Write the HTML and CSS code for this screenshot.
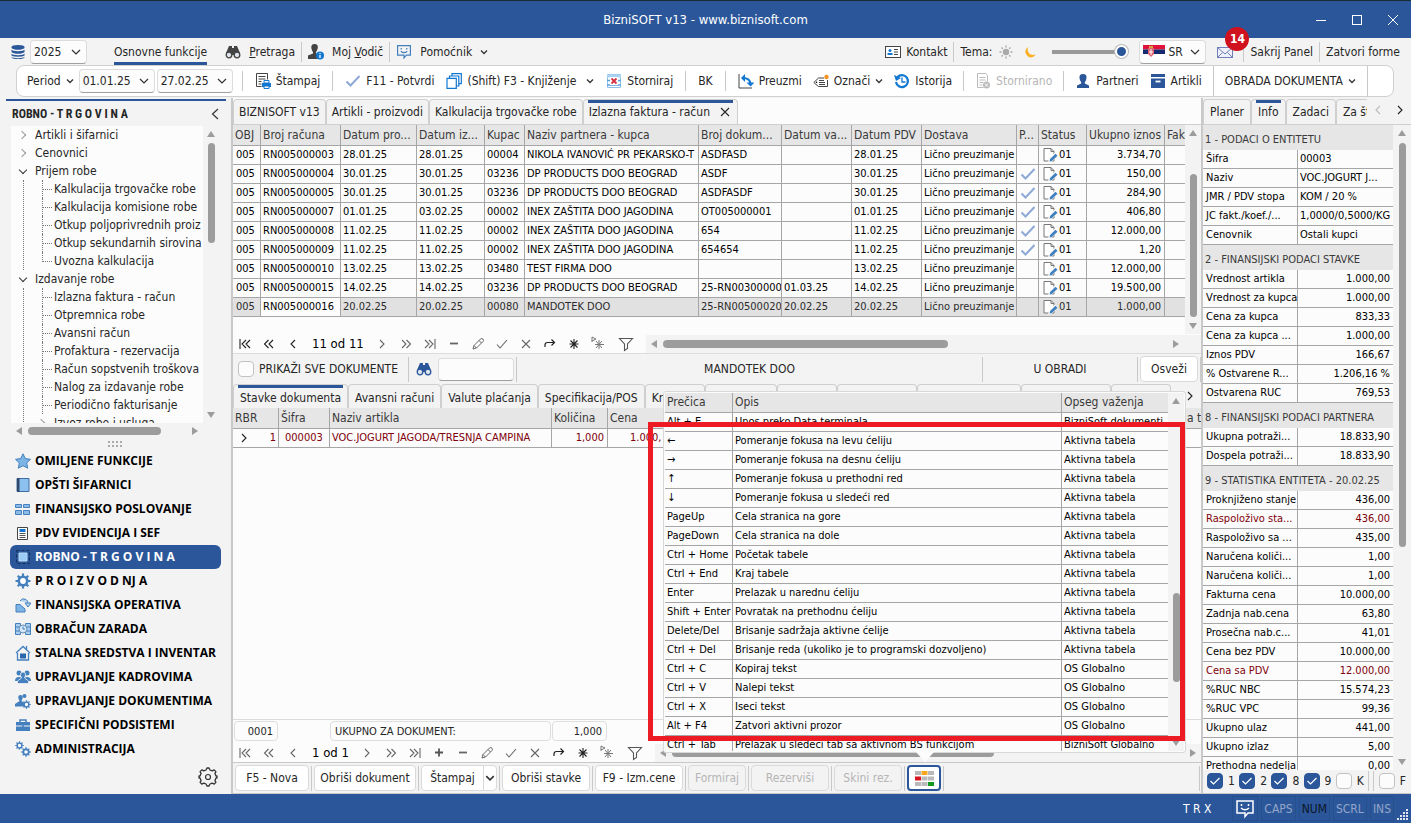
FILE: index.html
```html
<!DOCTYPE html>
<html lang="sr-Latn">
<head>
<meta charset="utf-8">
<title>BizniSOFT v13 - www.biznisoft.com</title>
<link rel="stylesheet" href="styles.css">
</head>
<body>
<svg class="symbols" aria-hidden="true">
  <symbol id="chev" viewBox="0 0 8 8"><path d="M1 2.500l3 3 3-3" fill="none" stroke="#333" stroke-width="1.300"/></symbol>
  <symbol id="doc" viewBox="0 0 16 16"><path d="M2 1.500h7l3 3V14H2z" fill="#fff" stroke="#777"/><path d="M9 1.500v3h3" fill="none" stroke="#777"/><path d="M6 15.500l1-4 6-6 3 3-6 6z" fill="#fcfcfc"/><path d="M7.500 14.500l.6-2.400 5.400-5.400 2 2-5.600 5.400z" fill="#3f7fbf"/></symbol>
  <symbol id="tick" viewBox="0 0 16 16"><path d="M1.500 8.500l4 4 9-9.500" fill="none" stroke="#8ea9d6" stroke-width="2"/></symbol>
  <symbol id="first" viewBox="0 0 16 16"><path d="M3 3v10M9 4L5 8l4 4M13 4L9 8l4 4" fill="none" stroke="currentColor" stroke-width="1.100"/></symbol>
  <symbol id="prev2" viewBox="0 0 16 16"><path d="M7.500 4l-4 4 4 4M12 4L8 8l4 4" fill="none" stroke="currentColor" stroke-width="1.100"/></symbol>
  <symbol id="prev" viewBox="0 0 16 16"><path d="M10 4L6 8l4 4" fill="none" stroke="currentColor" stroke-width="1.100"/></symbol>
  <symbol id="next" viewBox="0 0 16 16"><path d="M6 4l4 4-4 4" fill="none" stroke="currentColor" stroke-width="1.100"/></symbol>
  <symbol id="next2" viewBox="0 0 16 16"><path d="M4 4l4 4-4 4M8.500 4l4 4-4 4" fill="none" stroke="currentColor" stroke-width="1.100"/></symbol>
  <symbol id="last" viewBox="0 0 16 16"><path d="M3 4l4 4-4 4M7 4l4 4-4 4M13 3v10" fill="none" stroke="currentColor" stroke-width="1.100"/></symbol>
  <symbol id="plus" viewBox="0 0 16 16"><path d="M4 7.500h8M8 3.500v8" stroke="#555" stroke-width="1.800"/></symbol>
  <symbol id="minus" viewBox="0 0 16 16"><path d="M4 7.500h8" stroke="#666" stroke-width="1.800"/></symbol>
  <symbol id="pencil" viewBox="0 0 16 16"><path d="M3 13l1-3.500L10.500 3q1.500-1 2.500.2t0 2.300L6.500 12zM9 4.500L11.500 7M4 9.500L6.500 12" fill="none" stroke="currentColor"/></symbol>
  <symbol id="ok" viewBox="0 0 16 16"><path d="M3 8.500l3 3.500 7-8" fill="none" stroke="currentColor" stroke-width="1.100"/></symbol>
  <symbol id="cross" viewBox="0 0 16 16"><path d="M4 4l8 8M12 4l-8 8" fill="none" stroke="currentColor" stroke-width="1.100"/></symbol>
  <symbol id="redo" viewBox="0 0 16 16"><path d="M3 11V9q0-2.500 2.500-2.500H12M9.500 3.500l3 3-3 3" fill="none" stroke="#222" stroke-width="1.200"/></symbol>
  <symbol id="star" viewBox="0 0 16 16"><path d="M8 3v10M3.500 8h9M4.500 4.500l7 7M11.500 4.500l-7 7" stroke="#222" stroke-width="1.100"/></symbol>
  <symbol id="starp" viewBox="0 0 16 16"><path d="M9 4v9M5 8.500h9M6 5l6 7M12 5l-6 7" stroke="#777"/><path d="M2 1v5M2 1l4 2-4 2" fill="none" stroke="#777"/></symbol>
  <symbol id="funnel" viewBox="0 0 16 16"><path d="M1.500 2.500h13L9.500 8v4.500l-3 2V8z" fill="none" stroke="#555" stroke-width="1.100"/></symbol>
  <symbol id="binoc" viewBox="0 0 16 16"><path d="M4 2h3v2h2V2h3l3 7v2H1V9z" fill="currentColor"/><circle cx="4" cy="11" r="2.800" fill="#dfe6f0" stroke="currentColor" stroke-width="1.300"/><circle cx="12" cy="11" r="2.800" fill="#dfe6f0" stroke="currentColor" stroke-width="1.300"/></symbol>
  <symbol id="person" viewBox="0 0 16 16"><path d="M8 1q4 0 3.500 4.200Q11 8 9.800 9v1.500L14 12.500V15H2v-2.500l4.200-2V9Q5 8 4.500 5.200 4 1 8 1z" fill="currentColor"/></symbol>
  <symbol id="smile" viewBox="0 0 20 20"><path d="M2 2h16v12h-5l-3 3.500V14H2z" fill="none" stroke="currentColor" stroke-width="1.500"/><path d="M6.500 5v2M13.500 5v2M6 9q4 3.500 8 0" fill="none" stroke="currentColor" stroke-width="1.500"/></symbol>
  <symbol id="cog" viewBox="0 0 16 16"><circle cx="8" cy="8" r="4.200" fill="#fff" stroke="#4480bd" stroke-width="2.600"/><path d="M8 .5v3M8 12.500v3M.5 8h3M12.500 8h3M2.700 2.700l2.100 2.100M11.200 11.200l2.100 2.100M13.300 2.700l-2.100 2.100M4.800 11.200l-2.100 2.100" stroke="#4480bd" stroke-width="2.200"/></symbol>
</svg>

<header class="titlebar">
  <h1>BizniSOFT v13 - www.biznisoft.com</h1>
  <div class="winbtns">
    <button aria-label="Minimize"><svg width="12" height="12"><path d="M1 6.500h10" stroke="#fff"/></svg></button>
    <button aria-label="Maximize"><svg width="12" height="12"><rect x="1.500" y="1.500" width="9" height="9" fill="none" stroke="#fff"/></svg></button>
    <button aria-label="Close"><svg width="12" height="12"><path d="M1 1l10 10M11 1L1 11" stroke="#fff"/></svg></button>
  </div>
</header>

<nav class="menu">
  <div class="db"><svg class="ic" viewBox="0 0 16 16"><path d="M1.500 3q0-2 6.500-2t6.500 2v10q0 2-6.500 2t-6.500-2z" fill="#2b579a"/><path d="M1 4.500q2 2 7 2t7-2M1 8.500q2 2 7 2t7-2M1 12q2 1.500 7 1.500t7-1.500" fill="none" stroke="#f3f3f3" stroke-width="1.300"/></svg>
  <select class="combo year" aria-label="Godina"><option>2025</option></select></div>
  <a class="main-tab" href="#">Osnovne funkcije</a>
  <a class="mi" href="#"><svg class="ic dark"><use href="#binoc"/></svg><span><u>P</u>retraga</span></a>
  <i class="sep"></i>
  <a class="mi" href="#"><svg class="ic dark" viewBox="0 0 16 16"><path d="M6.500 0q3.800 0 3.300 4Q9 7 8 8v1.200L12 11v4H0v-3.500l5-2V8Q4 7 3.300 4 3 0 6.500 0z" fill="currentColor"/><circle cx="12" cy="11.500" r="4" fill="#1177d1"/><path d="M12 9v1M12 11v3" stroke="#fff" stroke-width="1.300"/></svg><span>Moj <u>V</u>odič</span></a>
  <i class="sep"></i>
  <a class="mi" href="#"><svg class="ic mid"><use href="#smile"/></svg><span>Pomoćnik</span><svg class="cv"><use href="#chev"/></svg></a>
  <span class="grow"></span>
  <a class="mi near" href="#"><svg class="ic" viewBox="0 0 16 16"><rect x=".5" y="2.500" width="15" height="11" fill="#fff" stroke="#444"/><circle cx="5" cy="6.500" r="1.500" fill="#1177d1"/><path d="M2.500 11V9h5v2z" fill="#1177d1"/><path d="M9 5.500h4M9 8h4M9 10.500h4" stroke="#444"/></svg><span>Kontakt</span></a>
  <i class="sep"></i>
  <label class="theme" for="tema">Tema:</label>
  <svg class="ic" viewBox="0 0 16 16"><circle cx="8" cy="8" r="3.200" fill="#aaa"/><path d="M8 1.500v2M8 12.500v2M1.500 8h2M12.500 8h2M3.500 3.500l1.300 1.300M11.200 11.200l1.300 1.300M12.500 3.500l-1.300 1.300M4.800 11.200l-1.300 1.300" stroke="#aaa" stroke-width="1.400"/></svg>
  <svg class="ic moon" viewBox="0 0 16 16"><path d="M6 3Q1 7 5 11.500t9-1Q8 12 6.500 8.500 5 5.500 6 3z" fill="#fdb022"/></svg>
  <input id="tema" class="slider" type="range" min="0" max="100" value="100">
  <div class="lang"><svg width="22" height="13"><rect width="22" height="4.500" fill="#e0123a"/><rect y="4.500" width="22" height="4.500" fill="#152a70"/><rect y="9" width="22" height="4" fill="#fff"/><path d="M5 3h6v6l-3 3-3-3z" fill="#e06070"/><path d="M6 1h4v2H6z" fill="#d8a040"/><path d="M8 4v6M6 7h4" stroke="#fff"/></svg>
  <select class="combo" aria-label="Jezik"><option>SR</option></select></div>
  <a class="mail" href="#" aria-label="Poruke"><svg class="ic" viewBox="0 0 16 16"><rect x=".5" y="3.500" width="15" height="10" fill="#eef1fa" stroke="#7180b8"/><path d="M.5 3.500L8 10l7.500-6.500M.5 13.500l5-5M15.500 13.500l-5-5" fill="none" stroke="#7180b8"/></svg><b class="badge">14</b></a>
  <i class="sep"></i>
  <a href="#">Sakrij Panel</a>
  <i class="sep"></i>
  <a class="last" href="#">Zatvori forme</a>
</nav>

<div class="ribbon">
  <button class="cmd tight">Period<svg class="cv"><use href="#chev"/></svg></button>
  <div class="dates"><select class="combo" aria-label="Od"><option>01.01.25</option></select><select class="combo" aria-label="Do"><option>27.02.25</option></select></div>
  <i class="sep"></i>
  <button class="cmd"><svg class="ic" viewBox="0 0 16 16"><path d="M1.500.5h11v6M1.500.5v13h5M3.500 3.500h7M3.500 6h7M3.500 8.500h3M3.500 11h3" fill="none" stroke="#444"/><path d="M7 10h9v4H7z" fill="#1177d1"/><path d="M9 7.500h5V10H9zM9 13h5v2.500H9z" fill="#fff" stroke="#1177d1"/></svg>Štampaj</button>
  <i class="sep"></i>
  <button class="cmd"><svg class="ic"><use href="#tick"/></svg>F11 - Potvrdi</button>
  <button class="cmd"><svg class="ic" viewBox="0 0 16 16"><g fill="#fff" stroke="#1177d1" stroke-width="1.200"><path d="M6 .7h9.300v10H6z"/><path d="M3.500 3h9.300v10H3.500z"/><path d="M1 5.300h9.300v10H1z"/></g></svg>(Shift) F3 - Knjiženje<svg class="cv far"><use href="#chev"/></svg></button>
  <button class="cmd"><svg class="ic" viewBox="0 0 16 16"><path d="M1.500 1.500h13v13h-13z" fill="#fff" stroke="#8fc0ea"/><path d="M1 3h14" stroke="#a9d2f3" stroke-width="3"/><path d="M1 7.500h3M12 7.500h3M1 12h14" stroke="#55a0df" stroke-width="1.500"/><rect x="4" y="4" width="8" height="8" fill="#fff"/><path d="M5.500 5.500l5 5M10.500 5.500l-5 5" stroke="#d83040" stroke-width="1.800"/></svg>Storniraj</button>
  <i class="sep"></i>
  <button class="cmd">BK</button>
  <i class="sep"></i>
  <div class="more-cmds">
  <button class="cmd"><svg class="ic" viewBox="0 0 16 16"><path d="M1 1v14h13" fill="none" stroke="#444"/><path d="M3 5l4-4v8zM8.500 9.500h8l-4 4z" fill="#1177d1"/><path d="M5 5q7 0 7.500 6" fill="none" stroke="#1177d1" stroke-width="2"/></svg>Preuzmi</button>
  <button class="cmd"><svg class="ic" viewBox="0 0 16 16"><path d="M14.500 7v6.500h-9L.8 9.500 5.500 5H11" fill="none" stroke="#444"/><path d="M6 7.500h5M6 9.500h6M6 11.500h6" stroke="#444"/><circle cx="3.500" cy="9.300" r=".8"/><circle cx="13.500" cy="4" r="2.200" fill="#f6921e"/></svg>Označi<svg class="cv"><use href="#chev"/></svg></button>
  <button class="cmd"><svg class="ic" viewBox="0 0 16 16"><path d="M3.500 4a6 6 0 1 1-1.500 5" fill="none" stroke="#1177d1" stroke-width="2.200"/><path d="M0 2l2 6 5-3z" fill="#1177d1"/><path d="M8 4.500V9h3.500" fill="none" stroke="#1177d1" stroke-width="1.300"/></svg>Istorija</button>
  <i class="sep"></i>
  <button class="cmd" disabled><svg class="ic" viewBox="0 0 16 16"><path d="M2.500.5h8l2 2v6M2.500.5v14h6M4.500 4.500h6M4.500 7h6M4.500 9.500h4M4.500 12h3" fill="none" stroke="#bbb"/><circle cx="11.500" cy="12" r="3.500" fill="#bbb"/><path d="M10 10.500l3 3M13 10.500l-3 3" stroke="#fff"/></svg>Stornirano</button>
  <i class="sep"></i>
  <button class="cmd"><svg class="ic blue"><use href="#person"/></svg>Partneri</button>
  <button class="cmd"><svg class="ic" viewBox="0 0 16 16"><path d="M1 1h14v3H1zM1 5.500h14V15H1z" fill="#2b579a"/><path d="M5.500 8.500h5" stroke="#fff" stroke-width="1.800"/></svg>Artikli</button>
  <i class="sep full"></i>
  <button class="cmd tight">OBRADA DOKUMENTA<svg class="cv"><use href="#chev"/></svg></button>
  <i class="sep full"></i>
  </div>
</div>

<main class="main">
  <aside class="side">
    <div class="side-head"><h2>ROBNO - T R G O V I N A</h2><button aria-label="Skupi"><svg width="8" height="12"><path d="M7 1L1.500 6 7 11" fill="none" stroke="#333" stroke-width="1.200"/></svg></button></div>
    <div class="tree-box">
      <ul class="tree">
        <li class="closed">Artikli i šifarnici</li>
        <li class="closed">Cenovnici</li>
        <li class="open">Prijem robe
          <ul>
            <li>Kalkulacija trgovačke robe</li>
            <li>Kalkulacija komisione robe</li>
            <li>Otkup poljoprivrednih proiz</li>
            <li>Otkup sekundarnih sirovina</li>
            <li>Uvozna kalkulacija</li>
          </ul>
        </li>
        <li class="open">Izdavanje robe
          <ul>
            <li>Izlazna faktura - račun</li>
            <li>Otpremnica robe</li>
            <li>Avansni račun</li>
            <li>Profaktura - rezervacija</li>
            <li>Račun sopstvenih troškova</li>
            <li>Nalog za izdavanje robe</li>
            <li>Periodično fakturisanje</li>
            <li class="closed">Izvoz robe i usluga</li>
          </ul>
        </li>
      </ul>
      <div class="vscroll tree-v"><i class="up"></i><b></b><i class="down"></i></div>
    </div>
    <div class="hscroll tree-h"><i class="lt"></i><b></b><i class="rt"></i></div>
    <div class="grip"></div>
    <nav class="modules">
      <a href="#"><svg class="ic" viewBox="0 0 16 16"><path d="M8 .8l2.300 4.800 5.200.7-3.800 3.600 1 5.300L8 12.700l-4.700 2.500 1-5.300L.5 6.300l5.200-.7z" fill="#7db4e6" stroke="#4480bd"/></svg>OMILJENE FUNKCIJE</a>
      <a href="#"><svg class="ic" viewBox="0 0 16 16"><path d="M2 1.500h12v13H2z" fill="#8cc0ee" stroke="#3f6fa5"/><path d="M2 1h2.500v14H2z" fill="#30496b"/></svg>OPŠTI ŠIFARNICI</a>
      <a href="#"><svg class="ic" viewBox="0 0 16 16"><g fill="#8cbbe6" stroke="#4480bd"><path d="M.5 3.500h6v3h-6zM8.500 3.500h6v3h-6zM.5 9.500h6v4h-6zM8.500 9.500h6v4h-6z"/></g></svg>FINANSIJSKO POSLOVANJE</a>
      <a href="#"><svg class="ic" viewBox="0 0 16 16"><path d="M2.500 2.500h10v12h-10z" fill="#fff" stroke="#444"/><path d="M4.500 4h6v3h-6z" fill="#1177d1"/><path d="M4.500 8.500h6M4.500 10.500h6M4.500 12.500h6" stroke="#555"/></svg>PDV EVIDENCIJA I SEF</a>
      <a href="#" class="on"><svg class="ic" viewBox="0 0 16 16"><path d="M1.500 1.500h13v13h-13z" fill="none" stroke="#16305c" stroke-dasharray="3 2"/><path d="M4 4h8v8H4z" fill="#9ccbf5" stroke="#b8dcfa"/></svg>ROBNO - T R G O V I N A</a>
      <a href="#"><svg class="ic"><use href="#cog"/></svg>P R O I Z V O D NJ A</a>
      <a href="#"><svg class="ic" viewBox="0 0 16 16"><path d="M1 7.500h4l5 4.500v3H1z" fill="#7db4e6" stroke="#4480bd"/><path d="M5 4q2-3.500 6-1.500Q13 4 13 6M10 6h6l-3 4z" fill="#b5d4ef" stroke="#4480bd"/></svg>FINANSIJSKA OPERATIVA</a>
      <a href="#"><svg class="ic" viewBox="0 0 16 16"><path d="M.5 2.500h5v11h-5zM10.500 2.500h5v11h-5z" fill="#a9cdee" stroke="#4480bd"/><path d="M0 6h16M0 10h16" stroke="#4480bd"/><circle cx="8" cy="8" r="4" fill="#d4e7f8" stroke="#6a8fb5"/><path d="M8 5.500V8h2" fill="none" stroke="#4480bd"/></svg>OBRAČUN ZARADA</a>
      <a href="#"><svg class="ic" viewBox="0 0 16 16"><path d="M1 8l7-6.500L15 8M2.500 8v7h11V8M11.500 1v3.500" fill="none" stroke="#4480bd" stroke-width="1.300"/><path d="M5 8.500h6v5H5z" fill="#2b67ab"/></svg>STALNA SREDSTVA I INVENTAR</a>
      <a href="#"><svg class="ic" viewBox="0 0 16 16"><g fill="#4480bd"><circle cx="4" cy="4" r="2.500"/><circle cx="12" cy="4" r="2.500"/><path d="M0 12q0-4 4-4t4 4zM8 12q0-4 4-4t4 4z"/></g><path d="M8 3q3 0 2.500 3.500L9.500 9l4 3v2.500h-11V12l4-3-1-2.500Q5 3 8 3z" fill="#4480bd" stroke="#f3f3f3" stroke-width=".8"/></svg>UPRAVLJANJE KADROVIMA</a>
      <a href="#"><svg class="ic" viewBox="0 0 16 16"><g fill="#4480bd"><circle cx="9.500" cy="3" r="2"/><path d="M5.500 2q2.500 0 2.200 3L6.500 8l3 2v3.500H0V11l4.500-3-1.200-3Q3 2 5.500 2z"/></g><svg x="7" y="7" width="9" height="9"><use href="#cog"/></svg></svg>UPRAVLJANJE DOKUMENTIMA</a>
      <a href="#"><svg class="ic" viewBox="0 0 16 16"><path d="M1 5h14v3.500H1zM1 9.500h14V14H1z" fill="#4480bd"/><path d="M5 5V3h6v2M8 8v3" fill="none" stroke="#4480bd" stroke-width="1.500"/></svg>SPECIFIČNI PODSISTEMI</a>
      <a href="#"><svg class="ic" viewBox="0 0 16 16"><svg width="9" height="9"><use href="#cog"/></svg><svg x="6" y="6" width="10" height="10"><use href="#cog"/></svg></svg>ADMINISTRACIJA</a>
    </nav>
    <button class="gear" aria-label="Podešavanja"><svg width="20" height="20" viewBox="0 0 20 20"><path d="M8 3l1-2h2l1 2 2.200.9 2-1 1.700 1.700-1 2L18 9h1v2h-1l-1.100 2.400 1 2-1.700 1.700-2-1L12 17l-1 2H9l-1-2-2.200-.9-2 1-1.700-1.700 1-2L2 11H1V9h1l1.100-2.400-1-2 1.700-1.700 2 1z" fill="none" stroke="#333" stroke-width="1.300" stroke-linejoin="round"/><circle cx="10" cy="10" r="2.500" fill="none" stroke="#333" stroke-width="1.200"/></svg></button>
  </aside>

  <section class="center">
    <div class="tabs top-tabs">
      <button>BIZNISOFT v13</button><button>Artikli - proizvodi</button><button>Kalkulacija trgovačke robe</button><button class="on">Izlazna faktura - račun<svg class="x"><use href="#cross"/></svg></button>
    </div>
    <div class="docs">
      <div class="docs-clip">
      <table class="grid">
        <colgroup><col class="c28"><col class="c80"><col class="c76"><col class="c68"><col class="c40"><col><col class="c83"><col class="c70"><col class="c70"><col class="c95"><col class="c22"><col class="c48"><col class="c78"><col class="c20"></colgroup>
        <thead><tr><th>OBJ</th><th>Broj računa</th><th>Datum pro...</th><th>Datum iz...</th><th>Kupac</th><th>Naziv partnera - kupca</th><th>Broj dokum...</th><th>Datum va...</th><th>Datum PDV</th><th>Dostava</th><th>P...</th><th>Status</th><th>Ukupno iznos</th><th>Fak</th></tr></thead>
        <tbody>
          <tr><td>005</td><td>RN005000003</td><td>28.01.25</td><td>28.01.25</td><td>00004</td><td>NIKOLA IVANOVIĆ PR PEKARSKO-T</td><td>ASDFASD</td><td></td><td>28.01.25</td><td>Lično preuzimanje</td><td></td><td class="st"><svg><use href="#doc"/></svg>01</td><td class="num">3.734,70</td><td></td></tr>
          <tr><td>005</td><td>RN005000004</td><td>30.01.25</td><td>30.01.25</td><td>03236</td><td>DP PRODUCTS DOO BEOGRAD</td><td>ASDF</td><td></td><td>30.01.25</td><td>Lično preuzimanje</td><td class="st"><svg><use href="#tick"/></svg></td><td class="st"><svg><use href="#doc"/></svg>01</td><td class="num">150,00</td><td></td></tr>
          <tr><td>005</td><td>RN005000005</td><td>30.01.25</td><td>30.01.25</td><td>03236</td><td>DP PRODUCTS DOO BEOGRAD</td><td>ASDFASDF</td><td></td><td>30.01.25</td><td>Lično preuzimanje</td><td class="st"><svg><use href="#tick"/></svg></td><td class="st"><svg><use href="#doc"/></svg>01</td><td class="num">284,90</td><td></td></tr>
          <tr><td>005</td><td>RN005000007</td><td>01.01.25</td><td>03.02.25</td><td>00002</td><td>INEX ZAŠTITA DOO JAGODINA</td><td>OT005000001</td><td></td><td>01.01.25</td><td>Lično preuzimanje</td><td class="st"><svg><use href="#tick"/></svg></td><td class="st"><svg><use href="#doc"/></svg>01</td><td class="num">406,80</td><td></td></tr>
          <tr><td>005</td><td>RN005000008</td><td>11.02.25</td><td>11.02.25</td><td>00002</td><td>INEX ZAŠTITA DOO JAGODINA</td><td>654</td><td></td><td>11.02.25</td><td>Lično preuzimanje</td><td class="st"><svg><use href="#tick"/></svg></td><td class="st"><svg><use href="#doc"/></svg>01</td><td class="num">12.000,00</td><td></td></tr>
          <tr><td>005</td><td>RN005000009</td><td>11.02.25</td><td>11.02.25</td><td>00002</td><td>INEX ZAŠTITA DOO JAGODINA</td><td>654654</td><td></td><td>11.02.25</td><td>Lično preuzimanje</td><td class="st"><svg><use href="#tick"/></svg></td><td class="st"><svg><use href="#doc"/></svg>01</td><td class="num">1,20</td><td></td></tr>
          <tr><td>005</td><td>RN005000010</td><td>13.02.25</td><td>13.02.25</td><td>03480</td><td>TEST FIRMA DOO</td><td></td><td></td><td>13.02.25</td><td>Lično preuzimanje</td><td></td><td class="st"><svg><use href="#doc"/></svg>01</td><td class="num">12.000,00</td><td></td></tr>
          <tr><td>005</td><td>RN005000015</td><td>14.02.25</td><td>14.02.25</td><td>03236</td><td>DP PRODUCTS DOO BEOGRAD</td><td>25-RN00300000</td><td>01.03.25</td><td>14.02.25</td><td>Lično preuzimanje</td><td></td><td class="st"><svg><use href="#doc"/></svg>01</td><td class="num">19.500,00</td><td></td></tr>
          <tr class="sel"><td>005</td><td class="focus">RN005000016</td><td>20.02.25</td><td>20.02.25</td><td>00080</td><td>MANDOTEK DOO</td><td>25-RN00500020</td><td>20.02.25</td><td>20.02.25</td><td>Lično preuzimanje</td><td></td><td class="st"><svg><use href="#doc"/></svg>01</td><td class="num">1.000,00</td><td></td></tr>
        </tbody>
      </table>
      </div>
      <div class="vscroll docs-v"><i class="up"></i><b></b><i class="down"></i></div>
    </div>
    <div class="recnav">
      <button aria-label="Prvi"><svg><use href="#first"/></svg></button><button aria-label="Stranica nazad"><svg><use href="#prev2"/></svg></button><button aria-label="Prethodni"><svg><use href="#prev"/></svg></button>
      <span>11 od 11</span>
      <button class="dim" aria-label="Sledeći"><svg><use href="#next"/></svg></button><button class="dim" aria-label="Stranica napred"><svg><use href="#next2"/></svg></button><button class="dim" aria-label="Poslednji"><svg><use href="#last"/></svg></button><button aria-label="Briši"><svg><use href="#minus"/></svg></button><button class="dim" aria-label="Izmeni"><svg><use href="#pencil"/></svg></button><button class="dim" aria-label="Potvrdi"><svg><use href="#ok"/></svg></button><button class="dim" aria-label="Odustani"><svg><use href="#cross"/></svg></button><button aria-label="Osveži"><svg><use href="#redo"/></svg></button><button aria-label="Obeleži"><svg><use href="#star"/></svg></button><button aria-label="Idi na oznaku"><svg><use href="#starp"/></svg></button><button class="wide" aria-label="Filter"><svg><use href="#funnel"/></svg></button>
      <div class="hscroll docs-h"><i class="lt"></i><b></b><i class="rt"></i></div>
    </div>
    <div class="filter">
      <label><input type="checkbox" class="cb">PRIKAŽI SVE DOKUMENTE</label>
      <i class="sep"></i>
      <svg class="ic blue"><use href="#binoc"/></svg>
      <input class="find" type="text" aria-label="Traži">
      <i class="sep"></i>
      <span class="partner">MANDOTEK DOO</span>
      <i class="sep"></i>
      <span class="state">U OBRADI</span>
      <i class="sep"></i>
      <button class="btn refresh">Osveži</button>
      <i class="sep"></i>
    </div>
    <div class="sub-tabs-row">
      <div class="tabs sub-tabs">
        <button class="on">Stavke dokumenta</button><button>Avansni računi</button><button>Valute plaćanja</button><button>Specifikacija/POS</button><button class="w60 start">Kn</button><button class="w72"></button><button class="w60"></button><button class="w80"></button><button class="w104"></button><button class="w90"></button><button class="w60"></button>
      </div>
      <button class="more" aria-label="Još kartica"><svg><use href="#next"/></svg></button>
    </div>
    <div class="items">
      <table class="grid">
        <colgroup><col class="c45"><col class="c51"><col class="c222"><col class="c56"><col class="c80"><col><col class="c16"></colgroup>
        <thead><tr><th>RBR</th><th>Šifra</th><th>Naziv artikla</th><th>Količina</th><th>Cena</th><th></th><th>a t</th></tr></thead>
        <tbody><tr class="red"><td class="rbr"><svg><use href="#next"/></svg>1</td><td class="code">000003</td><td>VOC.JOGURT JAGODA/TRESNJA CAMPINA</td><td class="num">1,000</td><td class="price">1.000,</td><td></td><td></td></tr></tbody>
      </table>
    </div>
    <div class="totals"><output class="t1">0001</output><output class="t2">UKUPNO ZA DOKUMENT:</output><output class="t3">1,000</output></div>
    <div class="recnav low">
      <button class="dim" aria-label="Prva"><svg><use href="#first"/></svg></button><button class="dim" aria-label="Stranica nazad"><svg><use href="#prev2"/></svg></button><button class="dim" aria-label="Prethodna"><svg><use href="#prev"/></svg></button>
      <span>1 od 1</span>
      <button class="dim" aria-label="Sledeća"><svg><use href="#next"/></svg></button><button class="dim" aria-label="Stranica napred"><svg><use href="#next2"/></svg></button><button class="dim" aria-label="Poslednja"><svg><use href="#last"/></svg></button><button aria-label="Dodaj"><svg><use href="#plus"/></svg></button><button aria-label="Briši"><svg><use href="#minus"/></svg></button><button class="dim" aria-label="Izmeni"><svg><use href="#pencil"/></svg></button><button class="dim" aria-label="Potvrdi"><svg><use href="#ok"/></svg></button><button class="dim" aria-label="Odustani"><svg><use href="#cross"/></svg></button><button aria-label="Osveži"><svg><use href="#redo"/></svg></button><button aria-label="Obeleži"><svg><use href="#star"/></svg></button><button aria-label="Idi na oznaku"><svg><use href="#starp"/></svg></button><button class="wide" aria-label="Filter"><svg><use href="#funnel"/></svg></button>
      <div class="hscroll items-h"><i class="lt"></i><b></b><i class="rt"></i></div>
    </div>
    <div class="actions">
      <button class="btn b74">F5 - Nova</button><i class="sep"></i>
      <button class="btn b102">Obriši dokument</button><i class="sep"></i>
      <div class="split"><button>Štampaj</button><button class="arrow" aria-label="Opcije štampe"><svg width="10" height="10"><use href="#chev"/></svg></button></div><i class="sep"></i>
      <button class="btn b88">Obriši stavke</button><i class="sep"></i>
      <button class="btn b88">F9 - Izm.cene</button><i class="sep"></i>
      <button class="btn b58" disabled>Formiraj</button><i class="sep"></i>
      <button class="btn b78" disabled>Rezerviši</button><i class="sep"></i>
      <button class="btn b68" disabled>Skini rez.</button><i class="sep"></i>
      <button class="btn keys" aria-label="Prečice"><svg width="19" height="15"><g fill="#b9b9b9"><path d="M0 0h6v4H0zM13 0h6v4h-6zM6.500 5.500h6v4h-6zM13 5.500h6v4h-6zM0 11h6v4H0zM6.500 11h6v4h-6z"/></g><path d="M6.500 0h6v4h-6z" fill="#f6a821"/><path d="M0 5.500h6v4H0z" fill="#d8151f"/><path d="M13 11h6v4h-6z" fill="#139a1e"/></svg></button><i class="sep"></i>
      <i class="sep tail"></i>
    </div>

    <div class="popup">
      <div class="popup-body">
        <div class="popup-clip">
        <table class="grid">
          <colgroup><col class="c68"><col><col class="c106"></colgroup>
          <thead><tr><th>Prečica</th><th>Opis</th><th>Opseg važenja</th></tr></thead>
          <tbody>
            <tr><td>Alt + E</td><td>Unos preko Data terminala</td><td>BizniSoft dokumenti</td></tr>
            <tr><td>←</td><td>Pomeranje fokusa na levu ćeliju</td><td>Aktivna tabela</td></tr>
            <tr><td>→</td><td>Pomeranje fokusa na desnu ćeliju</td><td>Aktivna tabela</td></tr>
            <tr><td>↑</td><td>Pomeranje fokusa u prethodni red</td><td>Aktivna tabela</td></tr>
            <tr><td>↓</td><td>Pomeranje fokusa u sledeći red</td><td>Aktivna tabela</td></tr>
            <tr><td>PageUp</td><td>Cela stranica na gore</td><td>Aktivna tabela</td></tr>
            <tr><td>PageDown</td><td>Cela stranica na dole</td><td>Aktivna tabela</td></tr>
            <tr><td>Ctrl + Home</td><td>Početak tabele</td><td>Aktivna tabela</td></tr>
            <tr><td>Ctrl + End</td><td>Kraj tabele</td><td>Aktivna tabela</td></tr>
            <tr><td>Enter</td><td>Prelazak u narednu ćeliju</td><td>Aktivna tabela</td></tr>
            <tr><td>Shift + Enter</td><td>Povratak na prethodnu ćeliju</td><td>Aktivna tabela</td></tr>
            <tr><td>Delete/Del</td><td>Brisanje sadržaja aktivne ćelije</td><td>Aktivna tabela</td></tr>
            <tr><td>Ctrl + Del</td><td>Brisanje reda (ukoliko je to programski dozvoljeno)</td><td>Aktivna tabela</td></tr>
            <tr><td>Ctrl + C</td><td>Kopiraj tekst</td><td>OS Globalno</td></tr>
            <tr><td>Ctrl + V</td><td>Nalepi tekst</td><td>OS Globalno</td></tr>
            <tr><td>Ctrl + X</td><td>Iseci tekst</td><td>OS Globalno</td></tr>
            <tr><td>Alt + F4</td><td>Zatvori aktivni prozor</td><td>OS Globalno</td></tr>
            <tr><td>Ctrl + Tab</td><td>Prelazak u sledeći tab sa aktivnom BS funkcijom</td><td>BizniSoft Globalno</td></tr>
          </tbody>
        </table>
        </div>
        <div class="vscroll popup-v"><i class="up"></i><b></b><i class="down"></i></div>
      </div>
    </div>
    <div class="highlight"></div>
  </section>

  <aside class="info">
    <div class="info-tabs-row">
      <div class="tabs info-tabs"><button>Planer</button><button class="on">Info</button><button>Zadaci</button><button>Za št</button></div>
      <button class="more dim" aria-label="Nazad"><svg><use href="#prev"/></svg></button><button class="more" aria-label="Napred"><svg><use href="#next"/></svg></button>
    </div>
    <div class="info-body">
      <div class="info-clip">
      <table class="grid props">
        <colgroup><col><col></colgroup>
        <tbody>
          <tr><th colspan="2">1 - PODACI O ENTITETU</th></tr>
          <tr><td>Šifra</td><td>00003</td></tr>
          <tr><td>Naziv</td><td>VOC.JOGURT J...</td></tr>
          <tr><td>JMR / PDV stopa</td><td>KOM / 20 %</td></tr>
          <tr><td>JC fakt./koef./...</td><td>1,0000/0,5000/KG</td></tr>
          <tr><td>Cenovnik</td><td>Ostali kupci</td></tr>
          <tr><th colspan="2">2 - FINANSIJSKI PODACI STAVKE</th></tr>
          <tr><td>Vrednost artikla</td><td class="num">1.000,00</td></tr>
          <tr><td>Vrednost za kupca</td><td class="num">1.000,00</td></tr>
          <tr><td>Cena za kupca</td><td class="num">833,33</td></tr>
          <tr><td>Cena za kupca ...</td><td class="num">1.000,00</td></tr>
          <tr><td>Iznos PDV</td><td class="num">166,67</td></tr>
          <tr><td>% Ostvarene R...</td><td class="num">1.206,16 %</td></tr>
          <tr><td>Ostvarena RUC</td><td class="num">769,53</td></tr>
          <tr><th colspan="2">8 - FINANSIJSKI PODACI PARTNERA</th></tr>
          <tr><td>Ukupna potraži...</td><td class="num">18.833,90</td></tr>
          <tr><td>Dospela potraži...</td><td class="num">18.833,90</td></tr>
          <tr><th colspan="2">9 - STATISTIKA ENTITETA - 20.02.25</th></tr>
          <tr><td>Proknjiženo stanje</td><td class="num">436,00</td></tr>
          <tr class="red"><td>Raspoloživo sta...</td><td class="num">436,00</td></tr>
          <tr><td>Raspoloživo sa ...</td><td class="num">435,00</td></tr>
          <tr><td>Naručena količi...</td><td class="num">1,00</td></tr>
          <tr><td>Naručena količi...</td><td class="num">1,00</td></tr>
          <tr><td>Fakturna cena</td><td class="num">10.000,00</td></tr>
          <tr><td>Zadnja nab.cena</td><td class="num">63,80</td></tr>
          <tr><td>Prosečna nab.c...</td><td class="num">41,01</td></tr>
          <tr><td>Cena bez PDV</td><td class="num">10.000,00</td></tr>
          <tr class="red"><td>Cena sa PDV</td><td class="num">12.000,00</td></tr>
          <tr><td>%RUC NBC</td><td class="num">15.574,23</td></tr>
          <tr><td>%RUC VPC</td><td class="num">99,36</td></tr>
          <tr><td>Ukupno ulaz</td><td class="num">441,00</td></tr>
          <tr><td>Ukupno izlaz</td><td class="num">5,00</td></tr>
          <tr><td>Prethodna nedelja</td><td class="num">0,00</td></tr>
        </tbody>
      </table>
      </div>
      <div class="vscroll info-v"><i class="up"></i><b></b><i class="down"></i></div>
    </div>
    <div class="checks">
      <label><input type="checkbox" class="cb" checked>1</label><label><input type="checkbox" class="cb" checked>2</label><label><input type="checkbox" class="cb" checked>8</label><label><input type="checkbox" class="cb" checked>9</label><label><input type="checkbox" class="cb">K</label><i class="sep"></i><i class="sep"></i><label><input type="checkbox" class="cb">F</label>
    </div>
  </aside>
</main>

<footer class="status">
  <span class="trx">T R X</span>
  <span class="cell"><svg width="20" height="20"><use href="#smile"/></svg></span>
  <span class="cell">CAPS</span><span class="cell num-on">NUM</span><span class="cell">SCRL</span><span class="cell">INS</span>
  <svg class="resize" width="12" height="12"><g fill="#dfe6f2"><path d="M9 0h2v2H9zM6 3h2v2H6zM9 3h2v2H9zM3 6h2v2H3zM6 6h2v2H6zM9 6h2v2H9zM0 9h2v2H0zM3 9h2v2H3zM6 9h2v2H6zM9 9h2v2H9z"/></g></svg>
</footer>
</body>
</html>
```

FILE: styles.css
```css
* { box-sizing: border-box; }
html, body { height: 100%; margin: 0; }
body {
  display: flex; flex-direction: column; overflow: hidden;
  background: #f3f3f3; color: #262626;
  font: 12px/16px "DejaVu Sans Condensed", "DejaVu Sans", sans-serif;
  font-stretch: condensed;
}
button, input, select { font: inherit; font-stretch: inherit; color: inherit; margin: 0; }
button { border: 0; background: none; padding: 0; white-space: nowrap; }
a { color: inherit; text-decoration: none; white-space: nowrap; }
h1, h2 { margin: 0; font-size: 12px; font-weight: normal; }
ul { list-style: none; margin: 0; padding: 0; }
svg { display: block; flex: none; }
.symbols { position: absolute; width: 0; height: 0; }
.ic { width: 16px; height: 16px; }
.cv { width: 8px; height: 8px; }
.dark { color: #444; }
.blue { color: #2b579a; }
.mid { color: #4480bd; }
.grow { flex: 1; }
.sep { flex: none; width: 1px; height: 20px; background: #c9c9c9; }

/* window caption */
.titlebar { flex: none; height: 38px; background: #2b579a; border-top: 1px solid #1c2b33; color: #fff; display: grid; grid-template-columns: 1fr auto 1fr; align-items: center; }
.titlebar h1 { grid-column: 2; font-size: 13px; }
.winbtns { display: flex; justify-content: flex-end; gap: 24px; padding-right: 12px; }

/* menu bar */
.menu { flex: none; height: 27px; display: flex; align-items: center; padding: 0 10px; gap: 6px; }
.db { display: flex; align-items: center; gap: 4px; }
.mi { display: flex; align-items: center; gap: 8px; }
.near { gap: 5px; }
.main-tab { margin: 0 12px 0 21px; line-height: 20px; border-bottom: 3px solid #2b579a; align-self: flex-end; }
.combo { appearance: none; height: 24px; border: 1px solid #dcdcdc; border-bottom-color: #a0a0a0; border-radius: 4px; padding: 0 20px 0 3px; background: #fcfcfc url("data:image/svg+xml,%3Csvg xmlns='http://www.w3.org/2000/svg' width='10' height='10'%3E%3Cpath d='M1 3l4 4 4-4' fill='none' stroke='%23333' stroke-width='1.2'/%3E%3C/svg%3E") no-repeat right 5px center; }
.year { width: 57px; }
.slider { appearance: none; width: 76px; height: 14px; margin: 0 5px 0 8px; background: linear-gradient(#999, #999) center / 100% 4px no-repeat; }
.slider::-webkit-slider-thumb { appearance: none; width: 13px; height: 13px; border-radius: 50%; background: #2b579a; border: 2px solid #fff; box-shadow: 0 0 0 1px #bbb; }
.moon { margin-left: 2px; }
.lang { display: flex; align-items: center; height: 24px; background: #fcfcfc; border: 1px solid #dcdcdc; border-bottom-color: #a0a0a0; border-radius: 4px; padding-left: 3px; width: 67px; }
.lang .combo { border: 0; height: 20px; width: 41px; background-color: transparent; }
.mail { position: relative; margin: 0 4px 0 5px; }
.badge { position: absolute; left: 8px; top: -17px; width: 24px; height: 24px; border-radius: 50%; background: #d0121f; color: #fff; text-align: center; line-height: 24px; }
.last { margin-right: 1px; }

/* ribbon */
.ribbon { flex: none; height: 32px; margin: 0 17px 1px 16px; display: flex; align-items: center; gap: 12px; padding-left: 10px; background: #fff; border: 1px solid #d0d0d0; border-radius: 8px; }
.more-cmds { display: flex; align-items: center; gap: 11px; }
.cmd { display: flex; align-items: center; gap: 5px; }
.cmd:disabled, .btn:disabled { color: #b5b5b5; }
.far { margin-left: 5px; }
.dates { display: flex; gap: 2px; margin: 0 -3px 0 -7px; }
.dates .combo { width: 76px; }
.full { height: 30px; }

/* body */
.main { flex: 1; min-height: 0; display: grid; grid-template-columns: 231px minmax(0, 1fr) 208px; }

/* navigation pane */
.side { display: flex; flex-direction: column; min-height: 0; }
.side-head { flex: none; margin: 1px 5px 0 6px; height: 27px; border-top: 2px solid #2b579a; display: flex; align-items: center; justify-content: space-between; padding: 0 7px 0 6px; }
.side-head h2 { font-weight: bold; font-family: Roboto, sans-serif; }
.tree-box { flex: none; display: flex; height: 297px; margin-left: 11px; }
.tree { width: 192px; overflow: hidden; background: #fcfcfc; white-space: nowrap; line-height: 18px; }
.tree li { position: relative; }
.tree > li { padding-left: 24px; }
.tree .closed::before, .tree > .open::before { content: ""; position: absolute; left: 8px; top: 6px; width: 5px; height: 5px; border: solid #999; border-width: 1px 1px 0 0; transform: rotate(45deg); }
.tree > .open::before { border-color: #333; transform: rotate(135deg); top: 5px; left: 9px; }
.tree > .open::after { content: ""; position: absolute; left: 12px; top: 18px; bottom: 0; border-left: 1px dotted #777; }
.tree ul { margin-left: 7px; }
.tree ul li { padding-left: 12px; }
.tree ul li:not(.closed)::before { content: ""; position: absolute; left: 0; top: 0; width: 9px; height: 9px; border: dotted #777; border-width: 0 0 1px 1px; }
.tree ul li:not(:last-child)::after { content: ""; position: absolute; left: 0; top: 9px; height: 9px; border-left: 1px dotted #777; }
.tree ul .closed::before { left: -4px; }
.grip { flex: none; width: 14px; height: 6px; margin: 2px 0 2px 108px; background: linear-gradient(90deg, #aaa 2px, transparent 2px) 0 0 / 4px 2px repeat-x, linear-gradient(90deg, #aaa 2px, transparent 2px) 0 4px / 4px 2px repeat-x; }
.modules { padding: 0 10px; }
.modules a { display: flex; align-items: center; gap: 4px; height: 24px; padding-left: 5px; border-radius: 6px; color: #000; font: bold 12px/24px "Open Sans", sans-serif; }
.modules .on { background: #2b579a; color: #fff; }
.gear { align-self: flex-end; margin: 6px 13px 0 0; }

/* scroll bars */
.vscroll { flex: none; width: 16px; display: flex; flex-direction: column; align-items: center; padding: 5px 0; background: #f3f3f3; }
.hscroll { flex: none; display: flex; align-items: center; background: #f3f3f3; }
.vscroll b { width: 7px; border-radius: 4px; background: #9c9c9c; }
.hscroll b { height: 8px; border-radius: 4px; background: #9c9c9c; }
.up, .down { border: solid transparent; border-width: 0 4px 6px; border-bottom-color: #9c9c9c; }
.down { border-width: 6px 4px 0; border-top-color: #9c9c9c; margin-top: auto; }
.lt, .rt { border: solid transparent; border-width: 4px 6px 4px 0; border-right-color: #9c9c9c; }
.rt { border-width: 4px 0 4px 6px; border-left-color: #9c9c9c; }
.tree-v b { height: 100px; margin-top: 6px; }
.tree-h { height: 16px; padding: 0 33px 0 16px; }
.tree-h b { width: 133px; margin: 0 auto 0 6px; }
.docs-v b { flex: 1; margin: 38px 0 6px; }
.docs-h { flex: 1; height: 18px; padding: 0 22px 0 5px; }
.docs-h b { width: 54%; margin: 0 auto 0 6px; }
.items-h { flex: 1; height: 18px; padding: 0 5px; }
.items-h b { width: 60%; margin: 0 auto 0 6px; }
.popup-v b { height: 89px; margin: auto 0 58px; }
.popup-v .down { margin-top: 0; }
.info-v { width: 18px; }
.info-v b { flex: 0 0 404px; margin-top: 7px; }

/* tabs */
.tabs { display: flex; overflow: hidden; }
.tabs button { flex: none; border: 1px solid #cfcfcf; border-bottom: 0; border-radius: 4px 4px 0 0; position: relative; padding: 0 5px; background: #f3f3f3; }
.tabs .on::before { content: ""; position: absolute; left: 4px; right: 4px; top: 0; height: 3px; background: #2b579a; }
.top-tabs { flex: none; height: 27px; padding-top: 1px; background: #fcfcfc; border-bottom: 1px solid #cfcfcf; }
.top-tabs .on { display: flex; align-items: center; gap: 7px; padding-right: 4px; }
.x { width: 16px; height: 16px; }

/* data grids */
.grid { width: 100%; table-layout: fixed; border-collapse: separate; border-spacing: 0; color: #000; }
.grid th, .grid td { padding: 0 2px; border: solid #a6a6a6; border-width: 0 1px 1px 0; text-align: left; white-space: nowrap; overflow: hidden; font-size: 11px; line-height: 18px; height: 19px; }
.grid th { font-size: 12px; font-weight: normal; background: #e6e6e6; color: #3a3a3a; line-height: 20px; height: 21px; }
.grid td:last-child, .grid th:last-child { border-right: 0; }
.grid td:first-child { padding-left: 3px; }
.grid .num { text-align: right; padding-right: 3px; }
.grid .sel td { background: #e1e1e1; color: #2b2b2b; }
.grid .sel .focus { background: #fcfcfc; color: #000; }
.grid .red td { color: #80000a; }
.grid .st svg { display: inline-block; width: 16px; height: 16px; margin-right: 1px; vertical-align: middle; }
.grid .st { padding-left: 3px; }
.grid .rbr { text-align: right; }
.rbr svg { float: left; width: 16px; height: 16px; margin-top: 1px; color: #222; }
.grid .code { padding-left: 6px; }
.grid .price { padding-left: 22px; }
.c16 { width: 16px; } .c20 { width: 20px; } .c22 { width: 22px; } .c28 { width: 28px; }
.c40 { width: 40px; } .c45 { width: 46px; } .c48 { width: 48px; } .c51 { width: 51px; }
.c56 { width: 56px; } .c68 { width: 68px; } .c70 { width: 70px; } .c76 { width: 76px; }
.c78 { width: 78px; } .c80 { width: 80px; } .c83 { width: 83px; } .c95 { width: 95px; }
.c106 { width: 106px; } .c222 { width: 222px; }

/* document pane */
.center { position: relative; display: flex; flex-direction: column; min-height: 0; border: solid #c9c9c9; border-width: 0 2px 1px; }
.docs { flex: none; display: flex; height: 209px; background: #fcfcfc; }
.docs-clip { flex: 1; min-width: 0; }
.recnav { flex: none; display: flex; align-items: center; height: 19px; background: #fcfcfc; color: #222; }
.recnav button, .more { width: 24px; display: flex; justify-content: center; }
.recnav svg, .more svg { width: 16px; height: 16px; }
.recnav span { padding: 0 6px 0 7px; color: #000; font-size: 13px; }
.recnav .wide { width: 36px; padding-right: 4px; }
.recnav .dim { color: #666; }
.filter { flex: none; display: flex; align-items: center; height: 31px; border-top: 1px solid #dcdcdc; padding-left: 5px; gap: 2px; }
.filter label { display: flex; align-items: center; gap: 5px; margin-right: 8px; }
.filter > .sep { height: 25px; }
.filter .ic { margin: 0 4px 0 5px; }
.cb { appearance: none; flex: none; width: 16px; height: 16px; border: 1px solid #c2c2c2; border-radius: 4px; background: #fcfcfc; }
.cb:checked { border-color: #2b579a; background: #2b579a url("data:image/svg+xml,%3Csvg xmlns='http://www.w3.org/2000/svg' width='14' height='14'%3E%3Cpath d='M2.500 7l3 3L11.500 4' fill='none' stroke='%23fff' stroke-width='1.2'/%3E%3C/svg%3E") center no-repeat; }
.find { width: 76px; height: 23px; border: 1px solid #dcdcdc; border-bottom-color: #a0a0a0; border-radius: 4px; background: #fcfcfc; }
.partner { flex: 1; text-align: center; }
.state { width: 150px; text-align: center; }
.btn { height: 26px; border: 1px solid #dadada; border-radius: 4px; background: #fff; text-align: center; }
.btn:disabled { background: #f3f3f3; }
.refresh { width: 58px; }
.sub-tabs-row { flex: none; display: flex; height: 24px; }
.sub-tabs { flex: 1; min-width: 0; padding-right: 20px; }
.tabs.sub-tabs button { padding: 3px 6px 0; }
.tabs.sub-tabs .start { text-align: left; }
.w60 { width: 60px; } .w72 { width: 72px; } .w80 { width: 80px; } .w90 { width: 90px; } .w104 { width: 104px; }
.more { align-items: center; flex: none; color: #222; }
.more.dim { color: #bbb; }
.sub-tabs-row .more { width: 22px; }
.items { flex: 1; min-height: 0; background: #fcfcfc; }
.totals { flex: none; display: flex; height: 24px; background: #fcfcfc; border-top: 1px solid #dcdcdc; padding: 1px 1px 2px; font-size: 11px; line-height: 19px; }
.totals output { border: 1px solid #dedede; border-radius: 4px; padding: 0 4px; }
.totals .t1 { width: 44px; text-align: right; margin-right: 52px; }
.totals .t2 { width: 221px; margin-right: 1px; }
.totals .t3 { width: 55px; text-align: right; }
.actions { flex: none; display: flex; align-items: center; height: 31px; border-top: 1px solid #c9c9c9; padding: 0 1px 0 2px; gap: 2px; }
.actions > .sep { height: 25px; }
.actions > .tail { margin-left: auto; }
.b58 { width: 58px; } .b68 { width: 68px; } .b74 { width: 74px; } .b78 { width: 78px; } .b88 { width: 88px; } .b102 { width: 102px; }
.split { display: flex; width: 76px; height: 26px; border: 1px solid #dadada; border-radius: 4px; background: #fff; }
.split button { flex: 1; display: flex; align-items: center; justify-content: center; }
.split .arrow { flex: 0 0 13px; border-left: 1px solid #dadada; }
.keys { width: 34px; border: 2px solid #2b579a; display: flex; align-items: center; justify-content: center; }

/* shortcut list shown above the keys button */
.popup { position: absolute; left: 430px; right: 15px; top: 293px; bottom: 40px; border: 1px solid #d8d8d8; border-radius: 3px; background: #fcfcfc; padding: 1px; }
.popup::after { content: ""; position: absolute; left: 252px; top: 100%; border: solid transparent; border-width: 10px 9px 0; border-top-color: #fcfcfc; }
.popup-body { height: 100%; display: flex; overflow: hidden; }
.popup-clip { flex: 1; min-width: 0; overflow: hidden; }
.popup .grid th { height: 20px; line-height: 19px; }
.popup .grid td { padding-left: 2px; }
.highlight { position: absolute; left: 415px; right: 16px; top: 324px; bottom: 52px; border: 5px solid #ed1c24; pointer-events: none; }

/* info pane */
.info { display: flex; flex-direction: column; min-width: 0; min-height: 0; border-bottom: 1px solid #c9c9c9; }
.info-tabs-row { flex: none; display: flex; height: 27px; padding-top: 1px; border-bottom: 1px solid #cfcfcf; }
.info-tabs { flex: 1; min-width: 0; }
.tabs.info-tabs button { padding: 0 6px; }
.info-tabs-row .more { width: 22px; padding-bottom: 4px; }
.info-body { flex: 1; min-height: 0; display: flex; background: #fcfcfc; overflow: hidden; }
.info-clip { flex: 1; overflow: hidden; }
.grid.props th { height: 25px; padding-top: 5px; line-height: 18px; font-size: 11px; border-width: 0 1px 0 0; }
.checks { flex: none; height: 23px; display: flex; align-items: center; justify-content: space-between; padding: 0 5px 2px 4px; }
.checks label { display: flex; align-items: center; gap: 5px; }

/* status bar */
.status { flex: none; height: 29px; display: flex; align-items: center; justify-content: flex-end; background: #2b579a; color: #93a5c8; gap: 3px; padding-right: 2px; }
.trx { color: #fff; padding-right: 18px; }
.cell { display: flex; align-items: center; justify-content: center; height: 25px; padding: 0 2px; border: 1px solid #264f8e; }
.cell svg { color: #fff; }
.num-on { color: #0c1626; }
.resize { align-self: flex-end; margin-bottom: 2px; }
```
